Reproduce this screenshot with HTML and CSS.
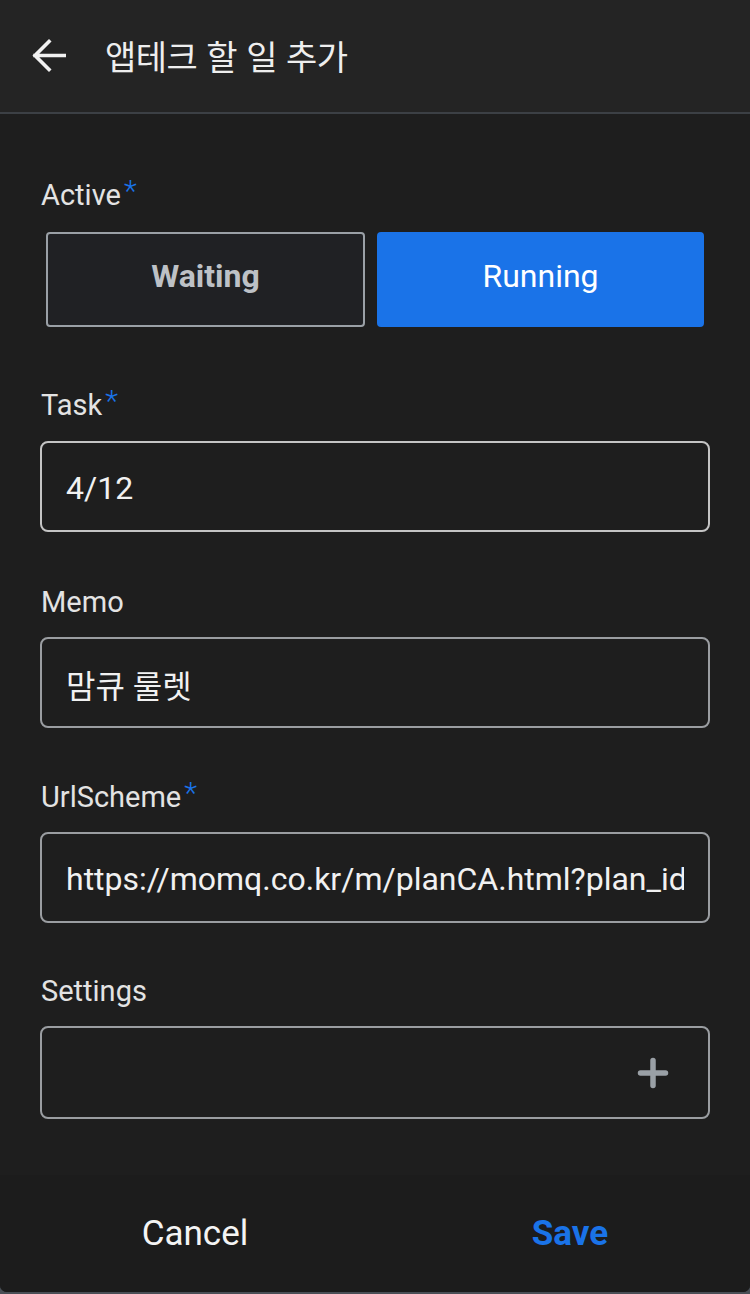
FILE: index.html
```html
<!DOCTYPE html>
<html lang="ko">
<head>
<meta charset="utf-8">
<title>앱테크 할 일 추가</title>
<link rel="stylesheet" href="styles.css">
</head>
<body>
<div class="app">
  <header class="topbar">
    <svg class="back" viewBox="0 0 34 35" width="34" height="35">
      <path d="M32.5 17.5H3 M17 3.5L3 17.5L17 31.5" fill="none" stroke="#f1f1f1" stroke-width="3.6" stroke-linecap="square" stroke-linejoin="miter"/>
    </svg>
    <h1 class="title">앱테크 할 일 추가</h1>
  </header>
  <main class="content">
    <section class="field field-active">
      <div class="label">Active<span class="req">*</span></div>
      <div class="toggle">
        <button class="opt opt-off">Waiting</button>
        <button class="opt opt-on">Running</button>
      </div>
    </section>
    <section class="field field-task">
      <div class="label">Task<span class="req">*</span></div>
      <div class="input input-focus">4/12</div>
    </section>
    <section class="field field-memo">
      <div class="label">Memo</div>
      <div class="input">맘큐 룰렛</div>
    </section>
    <section class="field field-url">
      <div class="label">UrlScheme<span class="req">*</span></div>
      <div class="input"><span class="clip">https://momq.co.kr/m/planCA.html?plan_id=1234</span></div>
    </section>
    <section class="field field-settings">
      <div class="label">Settings</div>
      <div class="input input-settings">
        <svg class="plus" viewBox="0 0 32 32" width="32" height="32">
          <path d="M16 3.5V28.5 M3.5 16H28.5" stroke="#9aa0a6" stroke-width="5.5" stroke-linecap="round" fill="none"/>
        </svg>
      </div>
    </section>
  </main>
  <footer class="footer">
    <button class="fbtn cancel">Cancel</button>
    <button class="fbtn save">Save</button>
  </footer>
</div>
</body>
</html>
```
FILE: styles.css
```css
* { box-sizing: border-box; }
html, body {
  margin: 0;
  padding: 0;
  background: #4a4f56;
}
body {
  font-family: Roboto, "Noto Sans CJK KR", sans-serif;
  color: #e8eaed;
}
.app {
  width: 750px;
  height: 1292px;
  background: #1e1e1e;
  border-radius: 0 0 7px 7px;
  overflow: hidden;
  display: flex;
  flex-direction: column;
}
.topbar {
  height: 114px;
  flex: none;
  background: #242424;
  border-bottom: 2px solid #3c4045;
  display: flex;
  align-items: center;
  padding-left: 32px;
  padding-bottom: 2px;
}
.back { display: block; flex: none; }
.title {
  margin: 0 0 0 39px;
  font-family: "Noto Sans CJK KR", Roboto, sans-serif;
  font-weight: 400;
  font-size: 34px;
  color: #eeeeee;
  letter-spacing: -0.5px;
}
.content {
  flex: 1;
  padding: 64px 40px 0 40px;
}
.field-task { margin-top: 61px; }
.field-memo { margin-top: 53px; }
.field-url { margin-top: 52px; }
.field-settings { margin-top: 51px; }
.label {
  font-size: 29px;
  line-height: 34px;
  height: 34px;
  padding-left: 1px;
  color: #e3e3e3;
  margin-bottom: 18px;
}
.field-active .label { margin-bottom: 20px; }
.field-task .label { margin-bottom: 19px; }
.req {
  color: #1a73e8;
  font-size: 30px;
  font-weight: 300;
  vertical-align: top;
  position: relative;
  top: -4px;
  margin-left: 3px;
}
.toggle {
  display: grid;
  grid-template-columns: 319px 327px;
  column-gap: 12px;
  margin-left: 6px;
  height: 95px;
}
.opt {
  font-family: Roboto, sans-serif;
  font-size: 32px;
  border-radius: 4px;
  padding: 0 0 7px 0;
  margin: 0;
}
.opt-off {
  background: #202124;
  border: 2px solid #9aa0a6;
  color: #bdc1c6;
  font-weight: 700;
}
.opt-on {
  background: #1a73e8;
  border: none;
  color: #ffffff;
  font-weight: 400;
}
.input {
  height: 91px;
  border: 2px solid #9a9da1;
  border-radius: 8px;
  display: flex;
  align-items: center;
  padding: 2px 24px 0 24px;
  font-size: 32px;
  color: #f1f1f1;
  overflow: hidden;
  white-space: nowrap;
}
.input-focus { border-color: #c4c4c4; }
.clip {
  display: block;
  overflow: hidden;
  width: 100%;
}
.input-settings {
  height: 93px;
  justify-content: flex-end;
  padding: 0 39px 0 0;
}
.plus { display: block; }
.footer {
  height: 117px;
  flex: none;
  background: #1c1c1c;
  display: flex;
}
.fbtn {
  flex: 1;
  background: none;
  border: none;
  margin: 0;
  padding: 0 0 0 15px;
  font-family: Roboto, sans-serif;
  font-size: 35px;
}
.cancel { color: #f4f4f4; font-weight: 400; }
.save { color: #1a73e8; font-weight: 700; }
```
